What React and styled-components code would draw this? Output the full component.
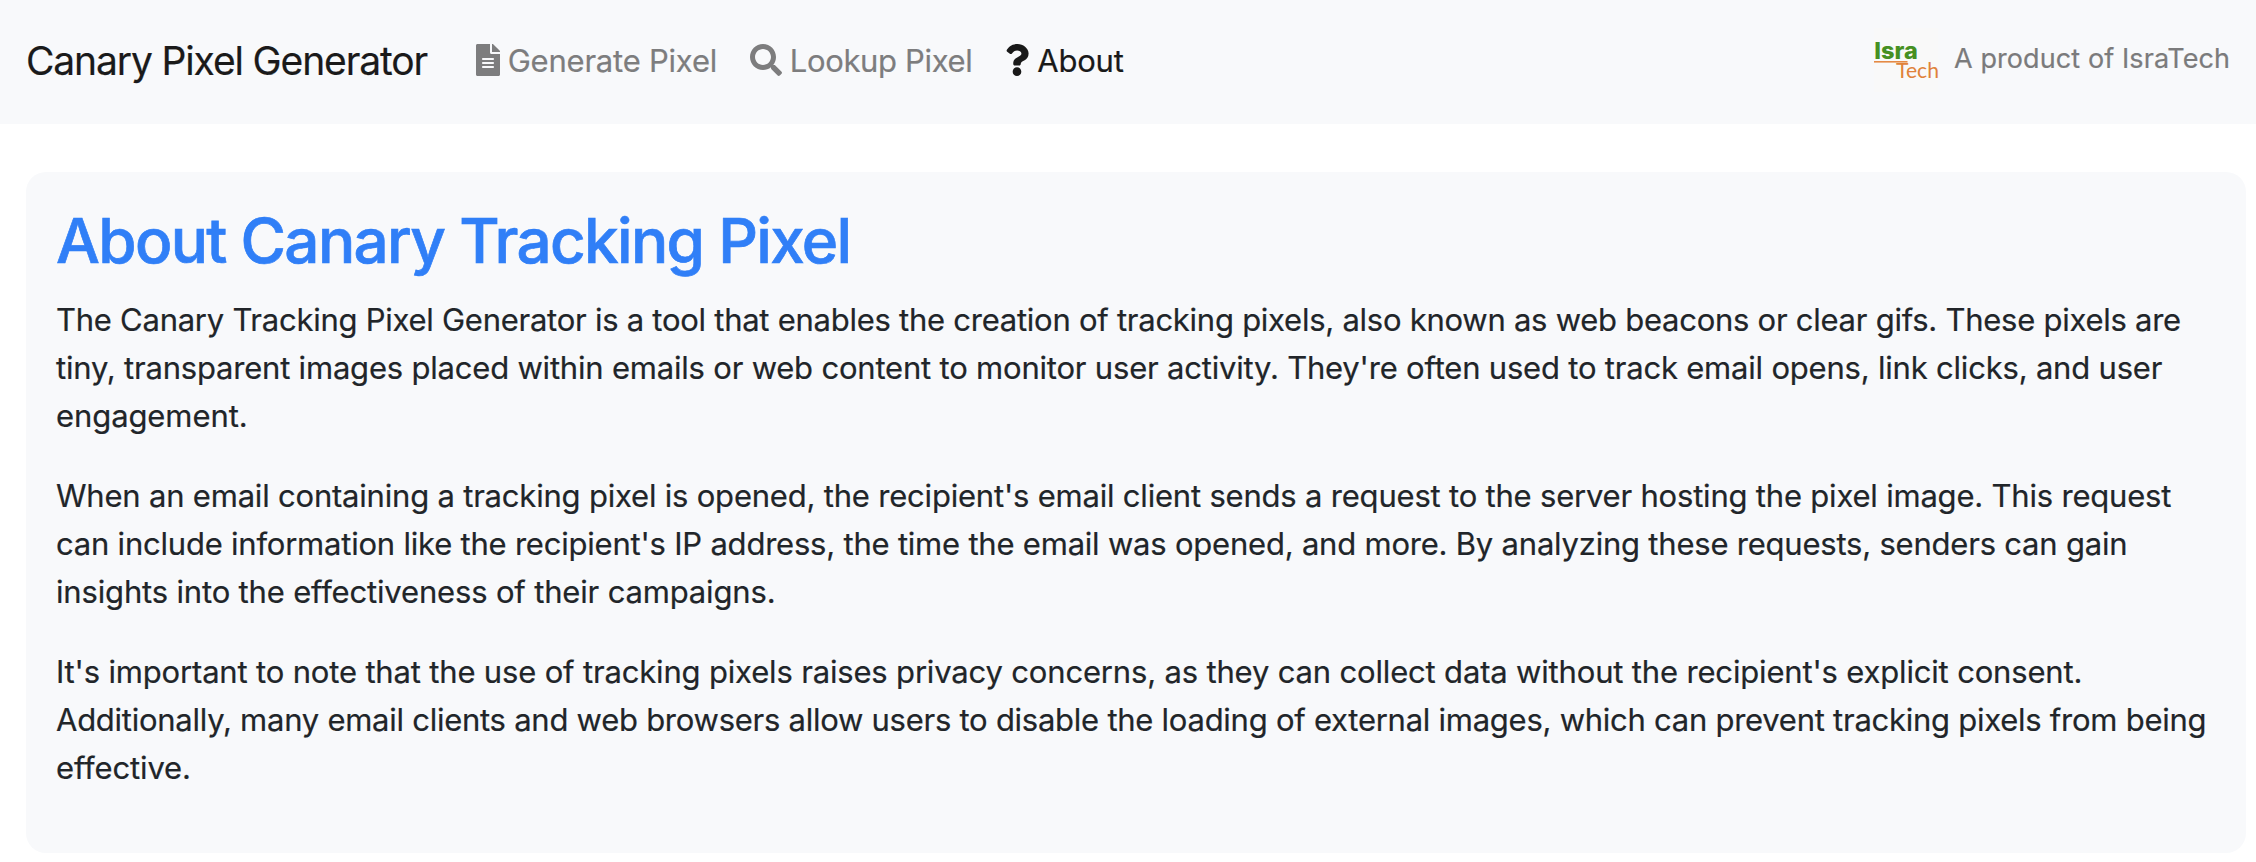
import React from 'react';
import styled, { createGlobalStyle } from 'styled-components';
import { FaFileAlt, FaSearch, FaQuestion } from 'react-icons/fa';

const GlobalStyle = createGlobalStyle`
  * { box-sizing: border-box; }
  body {
    margin: 0;
    background: #fff;
    color: #212529;
    font-family: Inter, "Liberation Sans", sans-serif;
    font-size: 31px;
    line-height: 48px;
    -webkit-text-stroke: 0.2px currentColor;
  }
`;

const Navbar = styled.header`
  display: flex;
  align-items: flex-start;
  height: 124px;
  padding: 28px 26px 0;
  background: #f8f9fb;
  white-space: nowrap;
`;

const Brand = styled.a`
  width: 449.7px;
  margin-top: 3px;
  font-size: 39px;
  line-height: 60px;
  letter-spacing: -1.14px;
  color: #1a1a1a;
`;

const Nav = styled.nav`
  display: flex;
  gap: 32.7px;
  margin-top: 9px;
`;

const NavLink = styled.a`
  display: flex;
  align-items: center;
  gap: 8px;
  letter-spacing: ${(p) => p.$tracking}px;
  color: ${(p) => (p.$active ? '#191919' : '#7d7d7e')};

  svg {
    width: ${(p) => p.$iconWidth}px;
    height: 32px;
    margin-bottom: 2px;
  }
`;

const Credit = styled.div`
  display: flex;
  align-items: flex-start;
  gap: 16px;
  width: 356px;
  margin-left: auto;
`;

const Logo = styled.svg`
  flex: none;
  width: 64px;
  height: 64px;
  overflow: visible;
  background: #f9f9f9;
`;

const LogoTop = styled.text`
  font: 800 22.5px Inter, sans-serif;
  fill: #469022;
`;

const LogoBottom = styled.text`
  font: 400 21.5px Lato, sans-serif;
  fill: #e0823a;
  stroke: none;
`;

const CreditText = styled.span`
  margin-top: 10px;
  font-size: 27px;
  line-height: 42px;
  letter-spacing: 0.09px;
  color: #7b7b7c;
`;

const Panel = styled.main`
  margin: 48px 10px 0 26px;
  padding: 30px 30px 29px;
  border-radius: 20px;
  background: #f8f9fb;
`;

const Title = styled.h1`
  margin: 0 0 16px;
  font-size: 62px;
  font-weight: 500;
  line-height: 78px;
  letter-spacing: -1.68px;
  color: #307ff7;
  -webkit-text-stroke: 0.7px currentColor;
`;

const Paragraph = styled.p`
  margin: 0 0 32px;
`;

const Line = styled.span`
  display: block;
  white-space: nowrap;
  letter-spacing: ${(p) => p.$tracking}px;
`;

const links = [
  { label: 'Generate Pixel', Icon: FaFileAlt, iconWidth: 24, tracking: -0.22 },
  { label: 'Lookup Pixel', Icon: FaSearch, iconWidth: 32, tracking: -0.34 },
  { label: 'About', Icon: FaQuestion, iconWidth: 24, tracking: -0.2, active: true },
];

const paragraphs = [
  [
    ['The Canary Tracking Pixel Generator is a tool that enables the creation of tracking pixels, also known as web beacons or clear gifs. These pixels are', -0.257],
    ["tiny, transparent images placed within emails or web content to monitor user activity. They're often used to track email opens, link clicks, and user", -0.2],
    ['engagement.', -0.09],
  ],
  [
    ["When an email containing a tracking pixel is opened, the recipient's email client sends a request to the server hosting the pixel image. This request", -0.2],
    ["can include information like the recipient's IP address, the time the email was opened, and more. By analyzing these requests, senders can gain", -0.213],
    ['insights into the effectiveness of their campaigns.', -0.166],
  ],
  [
    ["It's important to note that the use of tracking pixels raises privacy concerns, as they can collect data without the recipient's explicit consent.", -0.168],
    ['Additionally, many email clients and web browsers allow users to disable the loading of external images, which can prevent tracking pixels from being', -0.257],
    ['effective.', -0.13],
  ],
];

function IsraTechLogo() {
  return (
    <Logo viewBox="0 0 64 64">
      <LogoTop x="0.3" y="31" textLength="43.5" lengthAdjust="spacingAndGlyphs">Isra</LogoTop>
      <rect x="0" y="33" width="33.5" height="1.6" fill="#e58a45" />
      <LogoBottom x="22" y="49.5" textLength="43" lengthAdjust="spacingAndGlyphs">Tech</LogoBottom>
    </Logo>
  );
}

export default function App() {
  return (
    <>
      <GlobalStyle />
      <Navbar>
        <Brand>Canary Pixel Generator</Brand>
        <Nav>
          {links.map(({ label, Icon, iconWidth, tracking, active }) => (
            <NavLink key={label} $iconWidth={iconWidth} $tracking={tracking} $active={active}>
              <Icon />
              <span>{label}</span>
            </NavLink>
          ))}
        </Nav>
        <Credit>
          <IsraTechLogo />
          <CreditText>A product of IsraTech</CreditText>
        </Credit>
      </Navbar>
      <Panel>
        <Title>About Canary Tracking Pixel</Title>
        {paragraphs.map((lines, i) => (
          <Paragraph key={i}>
            {lines.map(([text, tracking]) => (
              <Line key={text} $tracking={tracking}>{text} </Line>
            ))}
          </Paragraph>
        ))}
      </Panel>
    </>
  );
}
